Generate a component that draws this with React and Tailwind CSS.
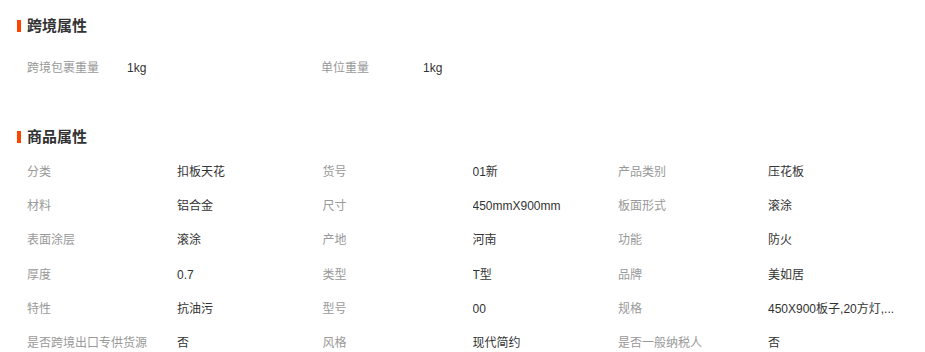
import React from "react";

const font = { fontFamily: '"Liberation Sans", Arial, "Noto Sans CJK SC", sans-serif' };

const rows = [
  [["分类", "扣板天花"], ["货号", "01新"], ["产品类别", "压花板"]],
  [["材料", "铝合金"], ["尺寸", "450mmX900mm"], ["板面形式", "滚涂"]],
  [["表面涂层", "滚涂"], ["产地", "河南"], ["功能", "防火"]],
  [["厚度", "0.7"], ["类型", "T型"], ["品牌", "美如居"]],
  [["特性", "抗油污"], ["型号", "00"], ["规格", "450X900板子,20方灯,..."]],
  [["是否跨境出口专供货源", "否"], ["风格", "现代简约"], ["是否一般纳税人", "否"]],
];

function Heading({ children }) {
  return (
    <div className="flex items-center h-6 pl-[17px]">
      <span className="w-1 h-3 bg-[#ff4400]" />
      <span className="ml-[6px] text-[15px] font-bold text-[#333] leading-6">{children}</span>
    </div>
  );
}

export default function App() {
  return (
    <div className="w-[925px] h-[352px] bg-white overflow-hidden text-xs" style={font}>
      <div className="pt-[14px]">
        <Heading>跨境属性</Heading>
        <div className="flex pl-[27px] mt-[13px] h-[34px] items-center">
          <div className="flex w-[294px]">
            <span className="w-[100px] text-[#999]">跨境包裹重量</span>
            <span className="text-[#333]">1kg</span>
          </div>
          <div className="flex">
            <span className="w-[102px] text-[#999]">单位重量</span>
            <span className="text-[#333]">1kg</span>
          </div>
        </div>
        <div className="mt-[40px]">
          <Heading>商品属性</Heading>
        </div>
        <div className="pl-[27px] mt-[6px]">
          {rows.map((r, i) => (
            <div key={i} className="flex h-[34.2px] items-center">
              {r.map(([k, v], j) => (
                <div key={j} className="flex w-[295.5px] items-center">
                  <span className="w-[150px] text-[#999] whitespace-nowrap">{k}</span>
                  <span className="text-[#333] whitespace-nowrap max-w-[128px] overflow-hidden">{v}</span>
                </div>
              ))}
            </div>
          ))}
        </div>
      </div>
    </div>
  );
}
